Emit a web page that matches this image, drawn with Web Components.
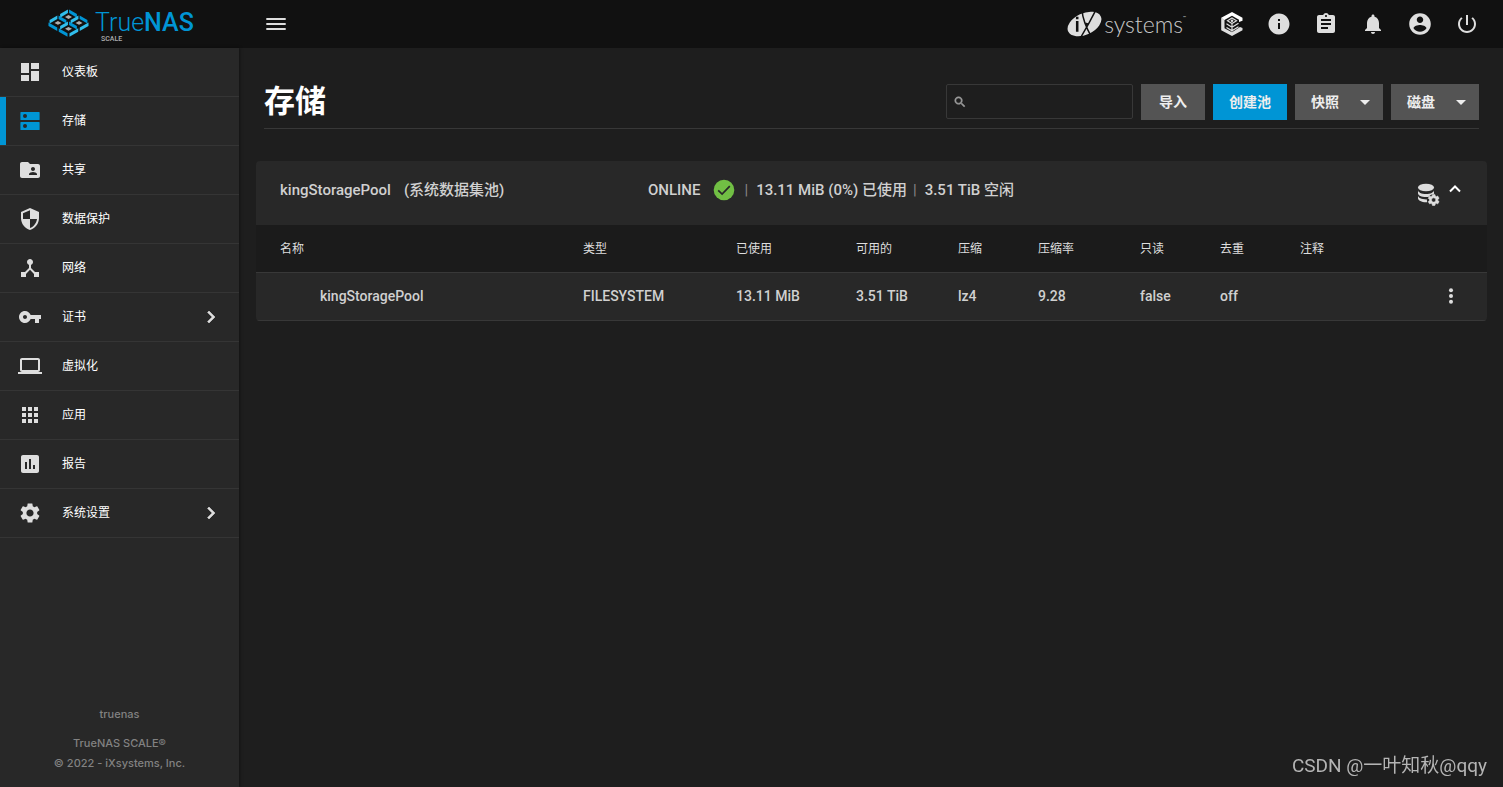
<!DOCTYPE html>
<html lang="zh-CN">
<head>
<meta charset="utf-8">
<title>TrueNAS SCALE</title>
<style>
html, body { margin: 0; height: 100%; }
body { background: #1e1e1e; color: #dedede; font-family: Roboto, "Noto Sans CJK SC", sans-serif; font-size: 14px; }
</style>
</head>
<body>
<nas-app></nas-app>

<script>
const ICONS = {
  dashboard: '<path d="M3 13h8V3H3v10zm0 8h8v-6H3v6zm10 0h8V11h-8v10zm0-18v6h8V3h-8z"/>',
  dns: '<path fill-rule="evenodd" d="M3 3h18a.6.6 0 0 1 .6.6v6.8a.6.6 0 0 1-.6.6H3a.6.6 0 0 1-.6-.6V3.600A.6.6 0 0 1 3 3zm4 2a2 2 0 1 0 0 4 2 2 0 0 0 0-4zM3 13h18a.6.6 0 0 1 .6.6v6.800a.6.6 0 0 1-.6.6H3a.6.6 0 0 1-.6-.6v-6.800A.6.6 0 0 1 3 13zm4 2a2 2 0 1 0 0 4 2 2 0 0 0 0-4z"/>',
  share: '<path d="M20 6h-8l-2-2H4c-1.100 0-1.990.9-1.990 2L2 18c0 1.100.9 2 2 2h16c1.100 0 2-.9 2-2V8c0-1.100-.9-2-2-2zm-5 3c1.100 0 2 .9 2 2s-.9 2-2 2-2-.9-2-2 .9-2 2-2zm4 8h-8v-1c0-1.330 2.670-2 4-2s4 .67 4 2v1z"/>',
  security: '<path d="M12 1L3 5v6c0 5.550 3.840 10.740 9 12 5.160-1.260 9-6.450 9-12V5l-9-4zm0 10.990h7c-.53 4.120-3.280 7.790-7 8.940V12H5V6.300l7-3.110v8.800z"/>',
  hub: '<path d="M17 16l-4-4V8.820C14.160 8.400 15 7.300 15 6c0-1.660-1.340-3-3-3S9 4.340 9 6c0 1.300.84 2.400 2 2.820V12l-4 4H3v5h5v-3.050l4-4.200 4 4.200V21h5v-5h-4z"/>',
  key: '<path d="M12.650 10C11.830 7.670 9.610 6 7 6c-3.310 0-6 2.690-6 6s2.690 6 6 6c2.610 0 4.830-1.670 5.650-4H17v4h4v-4h2v-4H12.650zM7 14c-1.100 0-2-.9-2-2s.9-2 2-2 2 .9 2 2-.9 2-2 2z"/>',
  laptop: '<path d="M20 18c1.100 0 1.990-.9 1.990-2L22 6c0-1.100-.9-2-2-2H4c-1.100 0-2 .9-2 2v10c0 1.100.9 2 2 2H0v2h24v-2h-4zM4 6h16v10H4V6z"/>',
  apps: '<path d="M4 8h4V4H4v4zm6 12h4v-4h-4v4zm-6 0h4v-4H4v4zm0-6h4v-4H4v4zm6 0h4v-4h-4v4zm6-10v4h4V4h-4zm-6 4h4V4h-4v4zm6 6h4v-4h-4v4zm0 6h4v-4h-4v4z"/>',
  chart: '<path d="M19 3H5c-1.100 0-2 .9-2 2v14c0 1.100.9 2 2 2h14c1.100 0 2-.9 2-2V5c0-1.100-.9-2-2-2zM9 17H7v-7h2v7zm4 0h-2V7h2v10zm4 0h-2v-4h2v4z"/>',
  gear: '<path d="M19.140 12.940c.04-.3.06-.61.06-.94 0-.32-.02-.64-.07-.94l2.030-1.580c.18-.14.23-.41.12-.61l-1.920-3.320c-.12-.22-.37-.29-.59-.22l-2.390.96c-.5-.38-1.030-.7-1.620-.94l-.36-2.540c-.04-.24-.24-.41-.48-.41h-3.840c-.24 0-.43.17-.47.41l-.36 2.540c-.59.24-1.130.57-1.620.94l-2.390-.96c-.22-.08-.47 0-.59.22L2.740 8.870c-.12.21-.08.47.12.61l2.030 1.580c-.05.3-.09.63-.09.94s.02.64.07.94l-2.030 1.580c-.18.14-.23.41-.12.61l1.920 3.320c.12.22.37.29.59.22l2.390-.96c.5.38 1.030.7 1.620.94l.36 2.540c.05.24.24.41.48.41h3.840c.24 0 .44-.17.47-.41l.36-2.540c.59-.24 1.130-.56 1.620-.94l2.390.96c.22.08.47 0 .59-.22l1.920-3.320c.12-.22.07-.47-.12-.61l-2.010-1.580zM12 15.600c-1.980 0-3.600-1.620-3.600-3.600s1.620-3.600 3.600-3.600 3.600 1.620 3.600 3.600-1.620 3.600-3.600 3.600z"/>',
  chevronRight: '<path d="M10 6L8.590 7.410 13.170 12l-4.580 4.590L10 18l6-6z" stroke="currentColor" stroke-width=".6"/>',
  menu: '<path d="M2.300 18h19.400v-2H2.300v2zm0-5h19.400v-2H2.300v2zm0-7v2h19.400V6H2.300z"/>',
  info: '<path d="M12 1.500C6.200 1.500 1.500 6.200 1.500 12S6.200 22.500 12 22.500 22.500 17.800 22.500 12 17.800 1.500 12 1.500zm1 15.500h-2v-6h2v6zm0-8h-2V7h2v2z"/>',
  assignment: '<path d="M19 3h-4.180C14.400 1.840 13.300 1 12 1c-1.300 0-2.400.84-2.820 2H5c-1.100 0-2 .9-2 2v14c0 1.100.9 2 2 2h14c1.100 0 2-.9 2-2V5c0-1.100-.9-2-2-2zm-7 0c.55 0 1 .45 1 1s-.45 1-1 1-1-.45-1-1 .45-1 1-1zm2 14H7v-2h7v2zm3-4H7v-2h10v2zm0-4H7V7h10v2z"/>',
  bell: '<path d="M12 22c1.100 0 2-.9 2-2h-4c0 1.100.89 2 2 2zm6-6v-5c0-3.070-1.640-5.640-4.500-6.320V4c0-.83-.67-1.500-1.500-1.500s-1.500.67-1.500 1.500v.68C7.630 5.360 6 7.920 6 11v5l-2 2v1h16v-1l-2-2z"/>',
  account: '<g transform="translate(12 12) scale(1.080) translate(-12 -12)"><path d="M12 2C6.480 2 2 6.480 2 12s4.480 10 10 10 10-4.480 10-10S17.520 2 12 2zm0 3c1.660 0 3 1.340 3 3s-1.340 3-3 3-3-1.340-3-3 1.340-3 3-3zm0 14.200c-2.500 0-4.710-1.280-6-3.220.03-1.990 4-3.080 6-3.080 1.990 0 5.970 1.090 6 3.080-1.290 1.940-3.500 3.220-6 3.220z"/></g>',
  power: '<path d="M13 3h-2v10h2V3zm4.830 2.170l-1.420 1.420C17.990 7.860 19 9.810 19 12c0 3.870-3.130 7-7 7s-7-3.130-7-7c0-2.190 1.010-4.140 2.580-5.420L6.170 5.170C4.230 6.820 3 9.260 3 12c0 4.970 4.030 9 9 9s9-4.030 9-9c0-2.740-1.230-5.180-3.170-6.830z"/>',
  command: '<path fill="#fff" d="M12 0 1.200 5.800 4 8.300 12 3.800l7 4V10l3.500-1.300V5.800z"/><path d="M1.200 5.800v12.400L12 24l10.500-5.800v-2.300l-2.500-.9-8 5.200-7.500-4V8.300z"/><g fill="none" stroke="currentColor" stroke-width="1.200"><path d="M12 6l4.500 2.800L12 11.600 7.500 8.800zM12 11.500v9M6.500 11.800l5.500 3.400 6.500-4M6.500 15.400l5.500 3.400 6.500-4"/></g><circle cx="12" cy="8.800" r="1.300"/>',
  search: '<path d="M15.500 14h-.79l-.28-.27C15.410 12.590 16 11.110 16 9.500 16 5.910 13.090 3 9.500 3S3 5.910 3 9.500 5.910 16 9.500 16c1.610 0 3.090-.59 4.230-1.570l.27.28v.79l5 4.990L20.490 19l-4.990-5zm-6 0C7.010 14 5 11.990 5 9.500S7.010 5 9.500 5 14 7.010 14 9.500 11.990 14 9.500 14z" stroke="currentColor"/>',
  dropdown: '<path d="M7 10l5 5 5-5z"/>',
  check: '<circle cx="12" cy="12" r="10.300" fill="#71bf44"/><path d="M6.200 12.300l3.900 3.700 7.700-7.900" fill="none" stroke="#282828" stroke-width="1.700"/>',
  database: '<ellipse cx="10" cy="5.500" rx="8" ry="3.800"/><path d="M2 8.200v3C2 13.400 5.600 15 10 15c1 0 2-.1 3-.3 1-1.600 2.800-2.600 4.800-2.600l.2-.9v-3c0 2.100-3.600 3.800-8 3.800s-8-1.700-8-3.800zM2 13.600v2.600c0 2.200 3.600 4 8 4h1.200a6 6 0 0 1-.2-2.700c-5 .2-9-1.600-9-3.900z"/><g transform="translate(10.700 11) scale(.58)"><path d="M19.140 12.940c.04-.3.06-.61.06-.94 0-.32-.02-.64-.07-.94l2.030-1.580c.18-.14.23-.41.12-.61l-1.920-3.320c-.12-.22-.37-.29-.59-.22l-2.390.96c-.5-.38-1.030-.7-1.620-.94l-.36-2.540c-.04-.24-.24-.41-.48-.41h-3.840c-.24 0-.43.17-.47.41l-.36 2.540c-.59.24-1.130.57-1.620.94l-2.390-.96c-.22-.08-.47 0-.59.22L2.740 8.870c-.12.21-.08.47.12.61l2.030 1.580c-.05.3-.09.63-.09.94s.02.64.07.94l-2.030 1.580c-.18.14-.23.41-.12.61l1.920 3.320c.12.22.37.29.59.22l2.390-.96c.5.38 1.030.7 1.620.94l.36 2.540c.05.24.24.41.48.41h3.840c.24 0 .44-.17.47-.41l.36-2.540c.59-.24 1.130-.56 1.620-.94l2.390.96c.22.08.47 0 .59-.22l1.920-3.320c.12-.22.07-.47-.12-.61l-2.010-1.580zM12 15.600c-1.980 0-3.600-1.620-3.600-3.600s1.620-3.600 3.600-3.600 3.600 1.620 3.600 3.600-1.620 3.600-3.600 3.600z" stroke="currentColor"/></g>',
  chevronUp: '<path d="M7 13.500l5-5 5 5" fill="none" stroke="#fff" stroke-width="2"/>',
  more: '<circle cx="12" cy="5" r="2.400"/><circle cx="12" cy="12" r="2.400"/><circle cx="12" cy="19" r="2.400"/>'
};

function define(name, html, setup) {
  const template = document.createElement('template');
  template.innerHTML = html;
  customElements.define(name, class extends HTMLElement {
    constructor() {
      super();
      this.attachShadow({ mode: 'open' }).append(template.content.cloneNode(true));
    }
    connectedCallback() { if (setup) setup(this, this.shadowRoot); }
  });
}

define('nas-icon', `
<style>
:host { display: block; width: 24px; height: 24px; flex: none; }
svg { display: block; width: 100%; height: 100%; fill: currentColor; }
</style><svg viewBox="0 0 24 24" aria-hidden="true"></svg>`,
(host, root) => { root.querySelector('svg').innerHTML = ICONS[host.getAttribute('name')]; });

define('nas-brand', `
<style>
:host { display: block; }
a { display: flex; align-items: center; gap: 6px; height: 48px; color: #0095d5; text-decoration: none; }
svg { width: 41px; height: 28px; flex: none; padding-bottom: 2px; }
.word { display: flex; flex-direction: column; padding-top: 6px; font-size: 25px; line-height: 24px; font-weight: 300; }
b { font-weight: 500; }
small { margin-left: 6px; font-size: 7px; line-height: 8px; font-weight: 500; color: #aeadae; }
</style>
<a href="#" aria-label="TrueNAS SCALE">
<svg viewBox="0 0 42 28" aria-hidden="true"></svg>
<span class="word"><span>True<b>NAS</b></span><small>SCALE</small></span></a>`,
(host, root) => {
  // Four open boxes in an isometric plane: two back walls and a grey floor each.
  const box = (cx, top) =>
    `<path fill="#31beec" d="M${cx - 8.600} ${top + 4.700}l8-4.700v3.600l-8 4.700z"/>` +
    `<path fill="#0095d5" d="M${cx + .6} ${top}l8 4.700v3.600l-8-4.700z"/>` +
    `<path fill="#aeadae" d="M${cx - 3.600} ${top + 7.600}l3.600-2 3.600 2-3.600 2z"/>`;
  root.querySelector('svg').innerHTML =
    box(21, .2) + box(10.200, 6.300) + box(31.800, 6.300) + box(21, 12.400) +
    '<path fill="#0095d5" d="M.5 13.500l9 5v3.600l-9-5zM11 19.400l9 5v3.600l-9-5z"/>' +
    '<path fill="#31beec" d="M41.500 13.500l-9 5v3.600l9-5zM31 19.400l-9 5v3.600l9-5z"/>';
});

define('nas-vendor', `
<style>
:host { display: block; }
a { display: flex; align-items: center; gap: 2px; color: #dedede; text-decoration: none; }
svg { width: 35px; height: 28px; }
span { font: 300 23px/28px Lato, sans-serif; color: #c8c8c8; }
small { align-self: flex-start; margin-top: 5px; margin-left: -2px; font: 4px/6px Lato, sans-serif; }
</style>
<a href="#" aria-label="iXsystems">
<svg viewBox="0 0 36 28" aria-hidden="true"><ellipse cx="18" cy="14" rx="18.500" ry="11" transform="rotate(-25 18 14)" fill="#dedede"/>
<path d="M15.500 0C16 9 20 18 25 27M29.500 0C25 9 20 18 14 28" fill="none" stroke="#111" stroke-width="1.500"/><path d="M19 12.500l3.500 1L20 17z" fill="#111"/><path d="M10.500 11v11M10.500 6.500v2.500" stroke="#111" stroke-width="2.600"/></svg>
<span>systems</span><small>™</small></a>`);

define('nas-topbar', `
<style>
:host { display: flex; align-items: center; height: 48px; background: #111; }
nas-brand { width: 192px; padding-left: 48px; flex: none; }
button { display: grid; place-items: center; width: 40px; height: 40px; padding: 0; border: 0; background: none; color: #dedede; }
.menu { margin-left: 16px; }
.actions { display: flex; gap: 7px; margin-left: 26px; padding-right: 16px; }
nas-vendor { margin-left: auto; }
</style>
<nas-brand></nas-brand>
<button class="menu" aria-label="菜单"><nas-icon name="menu"></nas-icon></button>
<nas-vendor></nas-vendor>
<div class="actions">
<button aria-label="TrueCommand"><nas-icon name="command"></nas-icon></button>
<button aria-label="状态"><nas-icon name="info"></nas-icon></button>
<button aria-label="任务"><nas-icon name="assignment"></nas-icon></button>
<button aria-label="警报"><nas-icon name="bell"></nas-icon></button>
<button aria-label="账户"><nas-icon name="account"></nas-icon></button>
<button aria-label="电源"><nas-icon name="power"></nas-icon></button>
</div>`);

define('nas-nav-item', `
<style>
:host { display: block; border-bottom: 1px solid #353535; }
a { display: flex; align-items: center; height: 48px; box-sizing: border-box; padding: 0 16px 0 18px; color: #dedede; text-decoration: none; }
.label { flex: 1; margin-left: 20px; font-size: 12px; line-height: 20px; color: #fff; }
:host([active]) a { border-left: 6px solid #0095d5; padding-left: 12px; }
:host([active]) .lead { color: #0095d5; }
.arrow { display: none; }
:host([expandable]) .arrow { display: block; }
</style>
<a href="#"><nas-icon class="lead"></nas-icon><span class="label"><slot></slot></span><nas-icon class="arrow" name="chevronRight"></nas-icon></a>`,
(host, root) => {
  const lead = document.createElement('nas-icon');
  lead.className = 'lead';
  lead.setAttribute('name', host.getAttribute('icon'));
  root.querySelector('.lead').replaceWith(lead);
});

define('nas-sidebar', `
<style>
:host { display: flex; flex-direction: column; justify-content: space-between; background: #282828; box-shadow: 1px 0 3px #0006; }
footer { padding-bottom: 14px; text-align: center; font: 500 11px/20px Inter, sans-serif; color: #828282; }
p { margin: 0; }
.host { margin-bottom: 9px; }
</style>
<nav>
<nas-nav-item icon="dashboard">仪表板</nas-nav-item>
<nas-nav-item icon="dns" active>存储</nas-nav-item>
<nas-nav-item icon="share">共享</nas-nav-item>
<nas-nav-item icon="security">数据保护</nas-nav-item>
<nas-nav-item icon="hub">网络</nas-nav-item>
<nas-nav-item icon="key" expandable>证书</nas-nav-item>
<nas-nav-item icon="laptop">虚拟化</nas-nav-item>
<nas-nav-item icon="apps">应用</nas-nav-item>
<nas-nav-item icon="chart">报告</nas-nav-item>
<nas-nav-item icon="gear" expandable>系统设置</nas-nav-item>
</nav>
<footer><p class="host">truenas</p><p>TrueNAS SCALE®</p><p>© 2022 - iXsystems, Inc.</p></footer>`);

define('nas-button', `
<style>
:host { display: block; }
button { display: flex; align-items: center; justify-content: center; height: 36px; min-width: 64px; padding: 0 16px; border: 0; background: #545454; color: #eee; font: 700 14px/20px Roboto, "Noto Sans CJK SC", sans-serif; }
:host([primary]) button { background: #0095d5; }
nas-icon { display: none; }
:host([dropdown]) button { padding-right: 6px; }
:host([dropdown]) nas-icon { display: block; margin-left: 14px; }
</style>
<button><slot></slot><nas-icon name="dropdown"></nas-icon></button>`);

define('nas-search', `
<style>
:host { display: block; }
label { display: flex; align-items: center; gap: 6px; width: 187px; height: 35px; box-sizing: border-box; padding: 0 6px; border: 1px solid #383838; border-radius: 2px; color: #999; }
nas-icon { width: 14px; height: 14px; }
input { flex: 1; min-width: 0; border: 0; outline: 0; background: none; color: #dedede; font: inherit; }
</style>
<label><nas-icon name="search"></nas-icon><input type="search" aria-label="搜索"></label>`);

define('nas-page-header', `
<style>
:host { display: flex; justify-content: space-between; margin: 0 8px; padding: 36px 0 8px; border-bottom: 1px solid #383838; }
h1 { margin: 0; font-size: 31px; line-height: 36px; font-weight: 700; color: #fff; }
div { display: flex; gap: 8px; }
</style>
<h1><slot></slot></h1>
<div><nas-search></nas-search><nas-button>导入</nas-button><nas-button primary>创建池</nas-button><nas-button dropdown>快照</nas-button><nas-button dropdown>磁盘</nas-button></div>`);

define('nas-dataset-table', `
<style>
:host { display: block; }
table { width: 100%; table-layout: fixed; border-collapse: collapse; }
th, td { height: 47px; padding: 0; border-bottom: 1px solid #383838; text-align: left; line-height: 20px; white-space: nowrap; }
th { background: #1b1b1b; font-size: 12px; font-weight: 400; }
td { height: 45px; padding-bottom: 2px; font-size: 14px; font-weight: 500; color: #d0d0d0; }
th:first-child { padding-left: 24px; }
td:first-child { padding-left: 64px; }
.w153 { width: 153px; } .w120 { width: 120px; } .w102 { width: 102px; } .w80 { width: 80px; } .last { width: 187px; }
button { display: block; margin-left: auto; margin-right: 24px; padding: 0; border: 0; background: none; color: #dedede; }
nas-icon { width: 24px; height: 20px; }
</style>
<table>
<colgroup><col><col class="w153"><col class="w120"><col class="w102"><col class="w80"><col class="w102"><col class="w80"><col class="w80"><col class="last"></colgroup>
<thead><tr><th>名称</th><th>类型</th><th>已使用</th><th>可用的</th><th>压缩</th><th>压缩率</th><th>只读</th><th>去重</th><th>注释</th></tr></thead>
<tbody><tr><td>kingStoragePool</td><td>FILESYSTEM</td><td>13.11 MiB</td><td>3.51 TiB</td><td>lz4</td><td>9.28</td><td>false</td><td>off</td><td><button aria-label="更多"><nas-icon name="more"></nas-icon></button></td></tr></tbody>
</table>`);

define('nas-pool-card', `
<style>
:host { display: block; margin-top: 32px; background: #282828; border-radius: 4px; overflow: hidden; }
header { display: flex; align-items: center; height: 64px; padding: 0 20px 0 24px; box-sizing: border-box; font-size: 15px; font-weight: 500; line-height: 20px; color: #d0d0d0; }
.title, .status, .tools { padding-bottom: 7px; }
.title { flex: 1; display: flex; gap: 13px; }
.status { flex: 2; display: flex; align-items: center; }
.status nas-icon { margin: 0 8px 0 12px; }
.bar { margin-right: 8px; color: #888; font-weight: 400; }
.used { margin-right: 6px; }
.tools { width: 83px; display: flex; justify-content: flex-end; align-items: center; gap: 3px; color: #dedede; }
button { padding: 0; border: 0; background: none; color: inherit; }
.manage { padding-top: 9px; }
</style>
<header>
<div class="title"><span>kingStoragePool</span><span>(系统数据集池)</span></div>
<div class="status"><span>ONLINE</span><nas-icon name="check"></nas-icon><span class="bar">|</span><span class="used">13.11 MiB (0%) 已使用</span><span class="bar">|</span><span>3.51 TiB 空闲</span></div>
<div class="tools"><button class="manage" aria-label="池操作"><nas-icon name="database"></nas-icon></button><button aria-label="收起"><nas-icon name="chevronUp"></nas-icon></button></div>
</header>
<nas-dataset-table></nas-dataset-table>`);

define('nas-app', `
<style>
:host { display: grid; grid-template: 48px 1fr / 239px 1fr; min-height: 100vh; }
nas-topbar { grid-column: 1 / -1; }
main { padding: 0 16px 0 17px; min-width: 0; }
.mark { position: fixed; right: 16px; bottom: 8px; font: 400 19px/26px Roboto, "Noto Sans CJK SC", sans-serif; color: #b4b4b4; }
</style>
<nas-topbar></nas-topbar>
<nas-sidebar></nas-sidebar>
<main>
<nas-page-header>存储</nas-page-header>
<nas-pool-card></nas-pool-card>
</main>
<span class="mark">CSDN @一叶知秋@qqy</span>`);
</script>
</body>
</html>
